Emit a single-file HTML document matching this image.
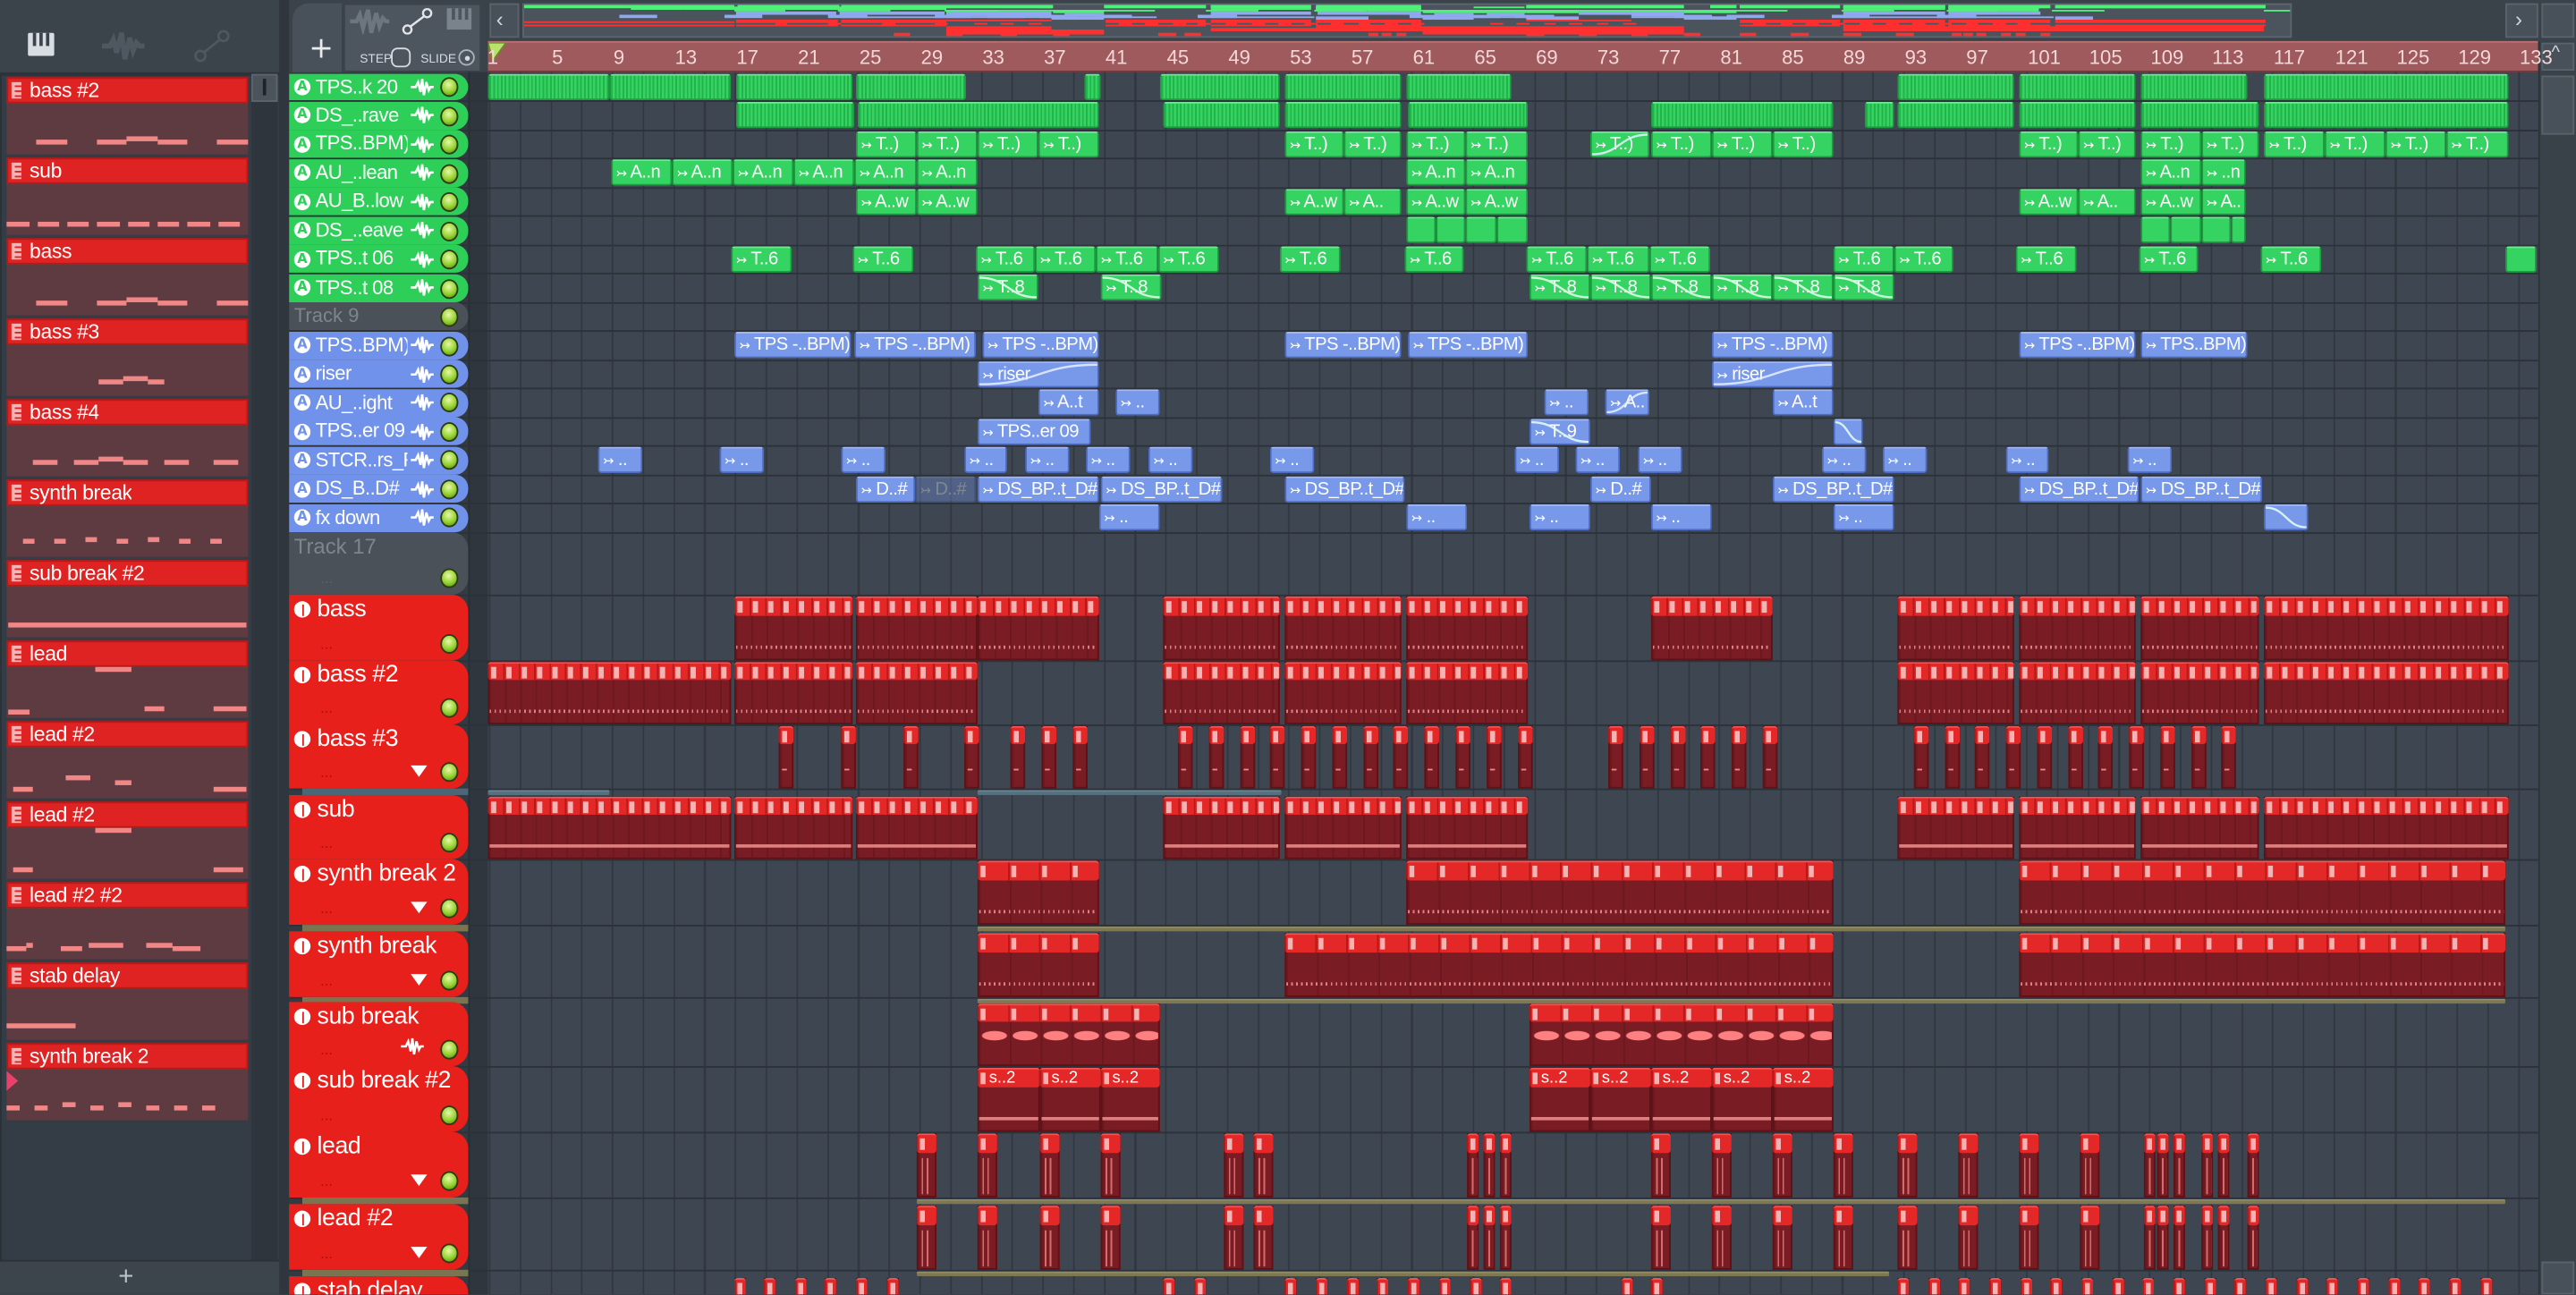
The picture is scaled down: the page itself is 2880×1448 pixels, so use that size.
<!DOCTYPE html>
<html><head><meta charset="utf-8">
<style>
html,body{margin:0;padding:0;width:2880px;height:1448px;overflow:hidden;background:#3a424a;}
#r{position:absolute;left:0;top:0;width:1568px;height:788px;transform:scale(1.83673);transform-origin:0 0;font-family:"Liberation Sans Narrow","Liberation Sans",sans-serif;color:#fff;overflow:hidden;}
#r div{position:absolute;box-sizing:border-box;}
.t{white-space:nowrap;overflow:hidden;}
</style></head><body>
<div id="r">
<div style="left:0;top:0;width:172px;height:45px;background:#3b434b;border-bottom:1px solid #2c333a"></div>
<div style="left:17px;top:20px;width:16px;height:14px;background:#d8dde2;border-radius:1px"></div>
<div style="left:20px;top:20px;width:2px;height:8px;background:#3b434b"></div>
<div style="left:24px;top:20px;width:2px;height:8px;background:#3b434b"></div>
<div style="left:28px;top:20px;width:2px;height:8px;background:#3b434b"></div>
<svg style="position:absolute;left:62px;top:18px" width="26" height="20" viewBox="0 0 26 20"><path d="M0 10 H5 L7 6 L9 14 L12 2 L14 18 L17 5 L19 13 L21 8 L23 10 H26" stroke="#4f5860" stroke-width="3" fill="none"/></svg>
<svg style="position:absolute;left:118px;top:18px" width="22" height="20" viewBox="0 0 22 20"><circle cx="4" cy="16" r="3" stroke="#4f5860" stroke-width="1.5" fill="none"/><circle cx="18" cy="4" r="3" stroke="#4f5860" stroke-width="1.5" fill="none"/><path d="M6 14 L16 6" stroke="#4f5860" stroke-width="1.5"/></svg>
<div style="left:0;top:45px;width:172px;height:723px;background:#343c45;border:1px solid #2a3137"></div>
<div style="left:153px;top:45px;width:16px;height:722px;background:#2e353c"></div>
<div style="left:153px;top:45px;width:16px;height:17px;background:#4b535b;border:1px solid #5c656d"></div>
<div style="left:160px;top:48px;width:2px;height:10px;background:#1d2328"></div>
<div style="left:0;top:768px;width:172px;height:20px;background:#3c444c"></div>
<div style="left:72px;top:769px;font-size:16px;color:#b8c0c8;line-height:18px">+</div>
<div style="left:170px;top:0;width:6px;height:788px;background:#2f363d"></div>

<div style="left:176px;top:0;width:121px;height:45px;background:#3a424a"></div>
<div style="left:178px;top:2px;width:30px;height:42px;background:#48505a;border-radius:10px 0 0 0"></div>
<div style="left:188px;top:20px;font-size:18px;line-height:20px;color:#e8ecef;font-family:'DejaVu Sans',sans-serif">+</div>
<div style="left:209px;top:2px;width:84px;height:42px;background:#4d555e;border:1px solid #3a4149"></div>
<svg style="position:absolute;left:213px;top:5px" width="24" height="16" viewBox="0 0 24 16"><path d="M0 8 H4 L6 4 L8 12 L11 1 L13 15 L16 3 L18 11 L20 6 L22 8 H24" stroke="#6d767e" stroke-width="2.5" fill="none"/></svg>
<svg style="position:absolute;left:244px;top:5px" width="20" height="16" viewBox="0 0 20 16"><circle cx="4" cy="13" r="2.5" stroke="#e2e6ea" stroke-width="1.3" fill="none"/><circle cx="16" cy="3" r="2.5" stroke="#e2e6ea" stroke-width="1.3" fill="none"/><path d="M6 11 L14 5" stroke="#e2e6ea" stroke-width="1.3"/></svg>
<div style="left:272px;top:5px;width:15px;height:13px;background:#7a838b"></div>
<div style="left:275px;top:5px;width:2px;height:7px;background:#4d555e"></div><div style="left:279px;top:5px;width:2px;height:7px;background:#4d555e"></div><div style="left:283px;top:5px;width:2px;height:7px;background:#4d555e"></div>
<div class="t" style="left:219px;top:31px;font-size:7.5px;color:#d6dbe0;line-height:9px">STEP</div>
<div style="left:238px;top:29px;width:12px;height:12px;border:1.3px solid #d6dbe0;border-radius:4px"></div>
<div class="t" style="left:256px;top:31px;font-size:7.5px;color:#d6dbe0;line-height:9px">SLIDE</div>
<div style="left:279px;top:30px;width:10px;height:10px;border:1px solid #aab2ba;border-radius:50%"></div>
<div style="left:282.5px;top:33.5px;width:3px;height:3px;background:#d6dbe0;border-radius:50%"></div>

<div style="left:297px;top:0;width:1271px;height:25px;background:#3a424a"></div>
<div style="left:298px;top:2px;width:18px;height:21px;background:#48505a;border:1px solid #5a636b"></div>
<div style="left:302px;top:3px;font-size:13px;color:#d0d6dc;line-height:18px">‹</div>
<div id="ov" style="left:318px;top:2px;width:1077px;height:21px;background:#4b545d;border:1px solid #5c656e;overflow:hidden"></div>
<div style="left:1525px;top:2px;width:20px;height:21px;background:#48505a;border:1px solid #5a636b"></div>
<div style="left:1531px;top:3px;font-size:13px;color:#d0d6dc;line-height:18px">›</div>
<div style="left:1547px;top:2px;width:20px;height:21px;background:#48505a;border:1px solid #5a636b"></div>
<div id="ruler" style="left:297px;top:25px;width:1248px;height:19px;background:#9f5a5d;border-top:1px solid #b87073;border-bottom:1px solid #6e3a3d"></div>
<svg style="position:absolute;left:297px;top:26px" width="12" height="12" viewBox="0 0 12 12"><path d="M0 0 H11 L3 11 Z" fill="#b9e26a" stroke="#6a8a2a" stroke-width="1"/></svg>
<div style="left:1545px;top:25px;width:23px;height:763px;background:#3a4249;border-left:1px solid #2b3238"></div>
<div style="left:1547px;top:26px;width:20px;height:17px;background:#48505a;border:1px solid #5a636b"></div>
<div style="left:1553px;top:26px;font-size:11px;color:#d0d6dc">^</div>
<div style="left:1547px;top:46px;width:20px;height:36px;background:#48505a;border:1px solid #5a636b"></div>
<div style="left:1547px;top:768px;width:20px;height:20px;background:#48505a;border:1px solid #5a636b"></div>
<div style="left:176px;top:44px;width:121px;height:744px;background:#333a41"></div>
<div style="left:285px;top:44px;width:12px;height:744px;background:#2f363d;border-left:1px solid #283036"></div>
<div id="grid" style="left:297px;top:44px;width:1248px;height:744px;background:#3e4651;background-image:repeating-linear-gradient(90deg,#30373f 0 1px,transparent 1px 18.714px);background-position:0.6px 0"></div>
</div>
<script>
const R=document.getElementById('r');
function el(css,html){const e=document.createElement('div');e.style.cssText=css;if(html!==undefined)e.innerHTML=html;R.appendChild(e);return e;}
function svg(x,y,w,h,inner){const d=document.createElement('div');d.style.cssText=`left:${x}px;top:${y}px;width:${w}px;height:${h}px`;d.innerHTML=`<svg width="${w}" height="${h}" viewBox="0 0 ${w} ${h}" style="display:block">${inner}</svg>`;R.appendChild(d);return d;}
for(let b=1;b<=133;b+=4){const x=297.6+(b-1)*9.357;el(`left:${x+(b==1?-1:1)}px;top:27px;font-size:12px;line-height:16px;color:#f4d8d8`,String(b));}
const chans=[['bass #2',[[22,41,38],[59,77,38],[77,96,36],[96,114,38],[132,151,38]]],
['sub',[[4,18,39],[23,36,39],[41,54,39],[59,73,39],[78,91,39],[96,109,39],[114,128,39],[133,146,39]]],
['bass',[[22,41,38],[59,77,38],[77,96,36],[96,114,38],[132,151,38]]],
['bass #3',[[60,75,37],[75,90,35],[90,100,37]]],
['bass #4',[[20,35,37],[45,60,37],[60,75,35],[75,90,37],[100,115,37],[130,145,37]]],
['synth break',[[14,21,36],[33,40,36],[52,59,35],[71,78,36],[90,97,35],[109,116,36],[128,135,36]]],
['sub break #2',[[5,150,38]]],
['lead',[[5,18,42],[58,80,16],[88,100,40],[130,150,40]]],
['lead  #2',[[8,20,40],[40,55,33],[70,80,36],[130,150,40]]],
['lead  #2',[[8,20,40],[58,80,16],[130,148,40]]],
['lead  #2 #2',[[4,16,39],[16,20,37],[37,50,39],[54,75,37],[89,105,37],[105,122,39]]],
['stab delay',[[4,46,37]]],
['synth break 2',[[4,12,38],[21,29,38],[38,46,36],[55,63,38],[72,80,36],[89,97,38],[106,114,38],[123,131,38]]]];
chans.forEach((c,i)=>{const t=47+i*49;
el(`left:4px;top:${t}px;width:147px;height:47px;background:#5e3a41`);
el(`left:4px;top:${t}px;width:147px;height:16px;background:#df2222;border:1px solid #b71818`);
el(`left:7px;top:${t+3}px;width:6px;height:10px;background:#f3b5b5`);
el(`left:9px;top:${t+5}px;width:4px;height:1px;background:#df2222`);el(`left:9px;top:${t+8}px;width:4px;height:1px;background:#df2222`);el(`left:9px;top:${t+11}px;width:4px;height:1px;background:#df2222`);
el(`left:18px;top:${t}px;font-size:12.5px;line-height:16px;letter-spacing:-0.2px`,c[0]).className='t';
c[1].forEach(d=>el(`left:${d[0]}px;top:${t+d[2]}px;width:${d[1]-d[0]}px;height:2.5px;background:#f08686`));
});
el(`left:4px;top:652px;width:0;height:0;border-left:7px solid #e8416a;border-top:6px solid transparent;border-bottom:6px solid transparent`);
const RH=17.47,rowY=i=>44.5+RH*i;
const G='#2ecf59',B='#7092ea',GR='#4a5159';
const tops=[['TPS..k 20',G],['DS_..rave',G],['TPS..BPM)',G],['AU_..lean',G],['AU_B..low',G],['DS_..eave',G],['TPS..t 06',G],['TPS..t 08',G],['Track 9',GR],['TPS..BPM)',B],['riser',B],['AU_..ight',B],['TPS..er 09',B],['STCR..rs_F',B],['DS_B..D#',B],['fx down',B]];
function led(x,y){el(`left:${x}px;top:${y}px;width:11px;height:12px;border-radius:50%;border:1px solid #2b3a12;background:radial-gradient(circle at 45% 35%,#e8f8a8,#93d22e 55%,#4f7d12)`);}
function wave(x,y){svg(x,y,14,10,'<path d="M0 5 H3 L4.5 2 L6 8 L7 0 L8 10 L9.5 2 L11 7 L12 5 H14" stroke="#fff" stroke-width="1.4" fill="none"/>');}
function aicon(x,y,col){el(`left:${x}px;top:${y}px;width:10px;height:10px;border-radius:50%;background:#fff;color:${col};font-size:8px;line-height:10px;text-align:center;font-weight:bold;font-family:'DejaVu Sans',sans-serif`,'A');}
function hline(y,c){el(`left:176px;top:${y}px;width:1369px;height:1px;background:${c||'#2b323a'}`);}
tops.forEach((t,i)=>{const y=rowY(i);hline(y+RH-0.5);
el(`left:176px;top:${y}px;width:109px;height:${RH-0.5}px;background:${t[1]};border-radius:0 8px 8px 0`);
if(t[1]!=GR){aicon(179,y+3.5,t[1]);el(`left:192px;top:${y}px;width:56px;font-size:12px;line-height:17px;letter-spacing:-0.3px`,t[0]).className='t';wave(250,y+3.5);}
else el(`left:179px;top:${y}px;font-size:12px;line-height:17px;color:#7d858d`,t[0]);
led(268,y+2.8);});
el(`left:176px;top:324px;width:109px;height:38px;background:#4a5159;border-radius:0 10px 10px 0`);
el(`left:179px;top:325px;font-size:13px;line-height:16px;color:#7d858d`,'Track 17');
el(`left:195px;top:347px;font-size:9px;color:#5d656d`,'...');led(268,346);hline(362);
const big=[['bass',362,40,null,0],['bass #2',402,39,null,0],['bass #3',441,39,'#4d6676',1],['sub',484,39,null,0],['synth break 2',523,40,'#7a7450',1],['synth break',567,40,'#7a7450',1],['sub break',610,39,null,2],['sub break #2',649,40,null,0],['lead',689,40,'#7a7450',1],['lead  #2',733,40,'#7a7450',1],['stab delay',777,40,null,0]];
big.forEach(b=>{const [n,y,h,strip,ic]=b;
el(`left:176px;top:${y}px;width:109px;height:${h-0.5}px;background:#e8201c;border-radius:0 10px 10px 0`);
el(`left:179px;top:${y+4}px;width:10px;height:10px;border-radius:50%;background:#fff`);
el(`left:183.5px;top:${y+5.5}px;width:1.5px;height:7px;background:#e8201c`);
el(`left:193px;top:${y+0.5}px;width:92px;font-size:14.5px;line-height:17px;letter-spacing:-0.2px`,n).className='t';
el(`left:195px;top:${y+h-15}px;font-size:9px;color:#a81010;line-height:10px`,'...');
led(268,y+h-16);
if(ic==1)el(`left:250px;top:${y+h-14}px;width:0;height:0;border-left:5px solid transparent;border-right:5px solid transparent;border-top:7px solid #fff`);
if(ic==2)wave(244,y+h-17);
hline(y+h);
if(strip){el(`left:184px;top:${y+h}px;width:101px;height:4px;background:${strip}`);}
});
const OV=document.getElementById('ov');
function ov(x1,x2,y,c){const d=document.createElement('div');d.style.cssText=`position:absolute;left:${(x1-297)*0.862}px;top:${(y-44)*0.027}px;width:${Math.max(1,(x2-x1)*0.862)}px;height:1.5px;background:${c}`;OV.appendChild(d);}
function curve(x,y,w,h){svg(x,y,w,h,`<path d="M0 1 C${w*0.5} 1 ${w*0.5} ${h-1} ${w} ${h-1}" stroke="#e8fff0" stroke-width="1.3" fill="none" opacity=".85"/>`);}
function curveUp(x,y,w,h){svg(x,y,w,h,`<path d="M0 ${h-1} C${w*0.5} ${h-1} ${w*0.5} 1 ${w} 1" stroke="#e8f0ff" stroke-width="1.3" fill="none" opacity=".85"/>`);}
function clip(row,x1,x2,label,col,opt){const y=rowY(row)+0.5,h=RH-1.5;opt=opt||'';
const bg=col=='g'?'#35d361':'#7898ea',bd=col=='g'?'#1e9c40':'#4e6cc4';
let img='';if(opt=='dense')img=';background-image:repeating-linear-gradient(90deg,#22b44a 0 1px,transparent 1px 2.3px)';
if(opt=='fade')img=';opacity:.35';
const e=el(`left:${x1}px;top:${y}px;width:${x2-x1-0.5}px;height:${h}px;background:${bg}${img};border:1px solid ${bd};border-top-color:${col=='g'?'#6fe892':'#a3b8f4'};border-radius:2px;font-size:11px;line-height:14px;padding-left:2px;letter-spacing:-0.3px`,label?('<span style="font-family:DejaVu Sans;font-size:8px">↣</span>'+label):'');e.className='t';
if(opt=='curve')curve(x1+1,y+1,x2-x1-2,h-2);if(opt=='up')curveUp(x1+1,y+1,x2-x1-2,h-2);
ov(x1,x2,y,col=='g'?'#4ef07a':'#8fa8f0');}
function seq(row,arr,label,col,opt){arr.forEach(a=>clip(row,a[0],a[1],a[2]!==undefined?a[2]:label,col,a[3]||opt));}
seq(0,[[297,371],[371,445],[448,519],[521,588],[660,670],[706,779],[782,853],[856,920],[1155,1226],[1229,1300],[1303,1368],[1378,1527]],'','g','dense');
seq(1,[[448,520],[522,669],[708,779],[782,853],[857,930],[1005,1116],[1135,1153],[1155,1226],[1229,1300],[1303,1375],[1378,1527]],'','g','dense');
seq(2,[[521,558],[558,595],[595,632],[632,669],[782,818],[818,853],[856,892],[892,930],[968,1004,' T..)','up'],[1005,1042],[1042,1079],[1079,1116],[1229,1265],[1265,1300],[1303,1340],[1340,1375],[1378,1415],[1415,1452],[1452,1489],[1489,1527]],' T..)','g');
seq(3,[[372,409],[409,446],[446,483],[483,520],[520,558],[558,595],[856,892],[892,930],[1303,1340],[1340,1367,' ..n']],' A..n','g');
seq(4,[[521,558],[558,595],[782,818],[818,853,' A..'],[856,892],[892,930],[1229,1265],[1265,1300,' A..'],[1303,1340],[1340,1367,' A..']],' A..w','g');
seq(5,[[856,874],[874,892],[892,911],[911,930],[1303,1321],[1321,1340],[1340,1358],[1358,1367]],'','g');
seq(6,[[445,482],[519,556],[594,630],[630,667],[667,705],[705,742],[779,816],[855,891],[929,966],[966,1004],[1004,1041],[1116,1153],[1153,1189],[1227,1264],[1302,1338],[1376,1413],[1525,1544,'']],' T..6','g');
seq(7,[[595,632],[670,707],[931,968],[968,1005],[1005,1042],[1042,1079],[1079,1116],[1116,1153]],' T..8','g','curve');
seq(9,[[447,518],[520,594],[598,669],[782,853],[857,930],[1042,1116],[1229,1300],[1303,1368,' TPS..BPM)']],' TPS -..BPM)','b');
seq(10,[[595,669],[1042,1116]],' riser','b','up');
seq(11,[[632,669,' A..t'],[679,706,' ..'],[940,967,' ..'],[977,1004,' A..','up'],[1079,1116,' A..t']],'','b');
seq(12,[[595,664,' TPS..er 09'],[931,968,' T..9','curve'],[1116,1134,'','curve']],'','b');
seq(13,[[364,391],[438,465],[512,539],[587,613],[624,651],[661,688],[699,726],[773,800],[922,949],[959,986],[997,1024],[1109,1136],[1146,1173],[1221,1247],[1295,1322]],' ..','b');
seq(14,[[521,557,' D..#'],[557,594,' D..#','fade'],[595,669],[670,744],[782,855],[968,1005,' D..#'],[1079,1153],[1229,1302],[1303,1377]],' DS_BP..t_D#','b');
seq(15,[[669,706],[856,893],[931,968],[1005,1042],[1116,1153],[1378,1405,'','curve']],' ..','b');
function rclip(y,h,x1,x2,cw,kind,lbl){const w=x2-x1-0.5;
el(`left:${x1}px;top:${y+0.5}px;width:${w}px;height:${h-1}px;background:#7a1c23;background-image:repeating-linear-gradient(90deg,rgba(0,0,0,.12) 0 1px,transparent 1px ${cw}px);border:1px solid #5c1217`);
const hd=el(`left:${x1}px;top:${y+0.5}px;width:${w}px;height:${Math.min(12,h*0.3)}px;background-color:#e42828;background-image:linear-gradient(90deg,transparent 2px,#f6b3b3 2px 5px,transparent 5px),repeating-linear-gradient(90deg,#b51a1a 0 1px,transparent 1px ${cw}px);background-size:${cw}px 7px,auto;background-repeat:repeat-x,repeat;background-position:0 2.5px,0 0;border-radius:2px;border-top:1px solid #f25656;font-size:10px;line-height:11px;padding-left:7px`,lbl||'');hd.className='t';
if(kind=='dots')el(`left:${x1+1}px;top:${y+h-9}px;width:${w-2}px;height:2px;background-image:repeating-linear-gradient(90deg,#e08080 0 1px,transparent 1px 3px)`);
if(kind=='line')el(`left:${x1+1}px;top:${y+h-9}px;width:${w-2}px;height:2px;background:#e88a8a;opacity:.9`);
if(kind=='blob')el(`left:${x1+1}px;top:${y+17}px;width:${w-2}px;height:7px;background-image:radial-gradient(ellipse at 50% 50%,#ff8080 0 55%,transparent 60%);background-size:18.7px 7px`);
if(kind=='bars')el(`left:${x1+1}px;top:${y+16}px;width:${w-2}px;height:${h-18}px;background-image:linear-gradient(90deg,transparent 2px,#ea8080 2px 3px,transparent 3px 5px,#ea8080 5px 6px,transparent 6px);background-size:100% 100%;opacity:.8`);
if(kind=='mark')el(`left:${x1+2}px;top:${y+h-12}px;width:3px;height:3px;border-top:1px solid #e88;`);
ov(x1,x2,y,'#ff3030');}
const B1=9.357,B2=18.714;
[[447,519],[521,595],[595,669],[708,779],[782,853],[856,930],[1005,1079],[1155,1226],[1229,1300],[1303,1375],[1378,1527]].forEach(a=>rclip(362,40,a[0],a[1],B1,'dots'));
const bsub=[[297,445],[447,519],[521,595],[708,779],[782,853],[856,930],[1155,1226],[1229,1300],[1303,1375],[1378,1527]];
bsub.forEach(a=>rclip(402,39,a[0],a[1],B1,'dots'));
bsub.forEach(a=>rclip(484,39,a[0],a[1],B1,'line'));
[474,512,550,587,615,634,653,717,736,755,773,792,811,830,848,867,886,905,924,979,998,1017,1035,1054,1073,1165,1184,1202,1221,1240,1259,1277,1296,1315,1334,1352].forEach(x=>rclip(441,39,x,x+9,9,'mark'));
[[595,669],[856,1116],[1229,1525]].forEach(a=>rclip(523,40,a[0],a[1],B2,'dots'));
[[595,669],[782,1116],[1229,1525]].forEach(a=>rclip(567,40,a[0],a[1],B2,'dots'));
[[595,706],[931,1116]].forEach(a=>rclip(610,39,a[0],a[1],B2,'blob'));
[[595,633],[633,670],[670,706],[931,968],[968,1005],[1005,1042],[1042,1079],[1079,1116]].forEach(a=>rclip(649,40,a[0],a[1],37.4,'line','s..2'));
const leads=[[558,567],[595,604],[633,642],[670,679],[745,754],[763,772],[893,897],[903,907],[913,917],[1005,1014],[1042,1051],[1079,1088],[1116,1125],[1155,1164],[1192,1201],[1229,1238],[1266,1275],[1305,1309],[1313,1317],[1323,1327],[1340,1344],[1350,1354],[1368,1372]];
leads.forEach(a=>{rclip(689,40,a[0],a[1]+3,12,'bars');rclip(733,40,a[0],a[1]+3,12,'bars');});
[447,465,484,502,521,540,708,727,782,801,820,838,857,876,895,913,987,1005,1155,1174,1192,1211,1230,1248,1267,1286,1304,1323,1342,1360,1379,1398,1416,1435,1454,1472,1491,1510].forEach(x=>rclip(777,40,x,x+7,8,'mark'));
function strip(y,x1,x2,c){el(`left:${x1}px;top:${y+0.5}px;width:${x2-x1}px;height:3px;background:${c};border-radius:1px;border-top:1px solid rgba(255,255,255,.15)`);}
strip(480,297,371,'#55707f');strip(480,595,780,'#55707f');
strip(563,595,1525,'#7e7852');strip(607,595,1525,'#7e7852');
strip(729,558,1525,'#7e7852');strip(773,558,1150,'#7e7852');
</script>
</body></html>
